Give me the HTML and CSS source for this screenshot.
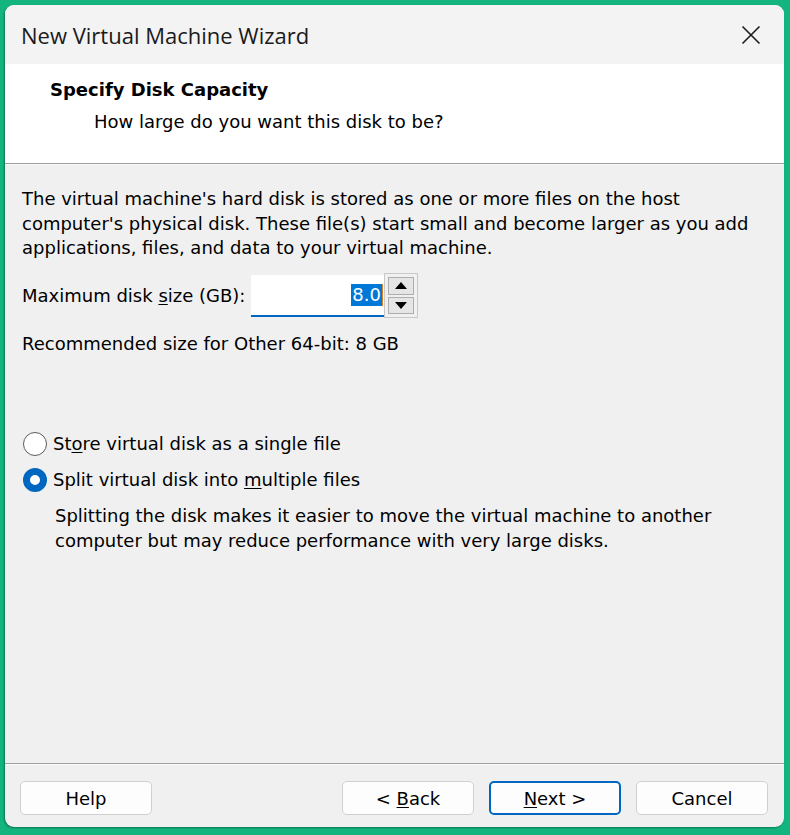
FILE: index.html
```html
<!DOCTYPE html>
<html>
<head>
<meta charset="utf-8">
<link rel="stylesheet" href="styles.css">
</head>
<body>
<div class="frame">
  <div class="window">
    <div class="titlebar">
      <span class="title">New Virtual Machine Wizard</span>
      <svg class="close" width="20" height="20" viewBox="0 0 20 20"><path d="M1.5 1.5 L18.5 18.5 M18.5 1.5 L1.5 18.5" stroke="#1a1a1a" stroke-width="1.6" fill="none"/></svg>
    </div>
    <div class="header">
      <div class="h-title">Specify Disk Capacity</div>
      <div class="h-sub">How large do you want this disk to be?</div>
    </div>
    <div class="sep"></div>
    <div class="content">
      <p class="para">The virtual machine's hard disk is stored as one or more files on the host computer's physical disk. These file(s) start small and become larger as you add applications, files, and data to your virtual machine.</p>
      <div class="size-row">
        <span class="label">Maximum disk <u>s</u>ize (GB):</span>
        <div class="spin">
          <div class="spin-input"><span class="sel">8.0</span><span class="caret"></span></div>
          <div class="spin-btns">
            <div class="sbtn"><svg width="12" height="7" viewBox="0 0 12 7"><path d="M6 0 L12 7 L0 7 Z" fill="#000"/></svg></div>
            <div class="sbtn"><svg width="12" height="7" viewBox="0 0 12 7"><path d="M0 0 L12 0 L6 7 Z" fill="#000"/></svg></div>
          </div>
        </div>
      </div>
      <div class="rec">Recommended size for Other 64-bit: 8 GB</div>
      <div class="radio-row first"><span class="radio"></span><span>St<u>o</u>re virtual disk as a single file</span></div>
      <div class="radio-row"><span class="radio on"></span><span>Split virtual disk into <u>m</u>ultiple files</span></div>
      <p class="desc">Splitting the disk makes it easier to move the virtual machine to another computer but may reduce performance with very large disks.</p>
    </div>
    <div class="sep"></div>
    <div class="footer">
      <button class="btn">Help</button>
      <div class="spacer"></div>
      <button class="btn">&lt; <u>B</u>ack</button>
      <button class="btn primary"><u>N</u>ext &gt;</button>
      <button class="btn">Cancel</button>
    </div>
  </div>
</div>
</body>
</html>
```
FILE: styles.css
```css
html, body {
  margin: 0;
  padding: 0;
}
body {
  width: 790px;
  height: 835px;
  overflow: hidden;
  background: #14b47f;
}
.frame {
  box-sizing: border-box;
  width: 790px;
  height: 835px;
  padding: 5px 6px 8px 5px;
  background: #14b47f;
}
.window {
  box-sizing: border-box;
  width: 779px;
  height: 822px;
  background: #f0f0f0;
  border-radius: 9px;
  overflow: hidden;
  display: flex;
  flex-direction: column;
  font-family: "DejaVu Sans", sans-serif;
  font-size: 18px;
  color: #000;
  box-shadow: -1px 1px 2px rgba(0,0,0,0.35);
}
.titlebar {
  height: 59px;
  flex: none;
  background: #f3f3f3;
  display: flex;
  align-items: center;
  padding: 0 23px 0 16px;
}
.title {
  font-family: "Open Sans", "Noto Sans", sans-serif;
  font-size: 22px;
  color: #1a1a1a;
  flex: 1;
  padding-top: 1px;
}
.close {
  display: block;
}
.header {
  height: 99px;
  flex: none;
  background: #fff;
  box-sizing: border-box;
  padding: 14px 0 0 45px;
}
.h-title {
  font-weight: bold;
  line-height: 24px;
}
.h-sub {
  margin-top: 8px;
  padding-left: 44px;
  line-height: 24px;
}
.sep {
  height: 1px;
  flex: none;
  background: #a0a0a0;
  border-bottom: 1px solid #fafafa;
}
.content {
  flex: 1;
  padding: 22px 17px 0 17px;
}
.para {
  margin: 0;
  line-height: 24.5px;
}
.size-row {
  display: flex;
  align-items: center;
  margin-top: 12px;
  height: 46px;
}
.label {
  width: 229px;
  flex: none;
  line-height: 24px;
}
.spin {
  display: flex;
  align-items: center;
}
.spin-input {
  box-sizing: border-box;
  width: 133px;
  height: 42px;
  background: #fff;
  border-bottom: 2px solid #0067c0;
  display: flex;
  justify-content: flex-end;
  align-items: center;
  padding-right: 1px;
}
.sel {
  background: #0078d7;
  color: #fff;
  line-height: 22px;
  padding: 0 1px 0 1px;
}
.caret {
  width: 1px;
  height: 22px;
  background: #d9822b;
}
.spin-btns {
  box-sizing: border-box;
  width: 34px;
  height: 45px;
  border: 1px solid #c8c8c8;
  background: #f0f0f0;
  padding: 3px;
  display: flex;
  flex-direction: column;
  gap: 2px;
}
.sbtn {
  flex: 1;
  border: 1px solid #adadad;
  background: #e5e5e5;
  display: flex;
  align-items: center;
  justify-content: center;
}
.sbtn svg {
  display: block;
}
.rec {
  margin-top: 13px;
  line-height: 24px;
}
.radio-row {
  display: flex;
  align-items: center;
  height: 36px;
}
.radio-row.first {
  margin-top: 70px;
}
.radio {
  box-sizing: border-box;
  width: 24px;
  height: 24px;
  border-radius: 50%;
  border: 1.5px solid #5a5a5a;
  background: #fff;
  margin: 0 6px 0 1px;
  flex: none;
}
.radio.on {
  border: 7.5px solid #0067c0;
  background: #fff;
}
.desc {
  margin: 5px 0 0 33px;
  line-height: 25px;
}
.footer {
  height: 62px;
  flex: none;
  display: flex;
  align-items: flex-start;
  box-sizing: border-box;
  padding: 16px 16px 0 15px;
  gap: 15px;
}
.spacer {
  flex: 1;
}
.footer .spacer + .btn {
  margin-left: -15px;
}
.btn {
  box-sizing: border-box;
  width: 132px;
  height: 34px;
  border: 1px solid #d0d0d0;
  border-radius: 5px;
  background: #fdfdfd;
  font-family: "DejaVu Sans", sans-serif;
  font-size: 18px;
  color: #000;
  padding: 0;
}
.btn.primary {
  border: 2px solid #0067c0;
}
u {
  text-underline-offset: 2px;
}
```
